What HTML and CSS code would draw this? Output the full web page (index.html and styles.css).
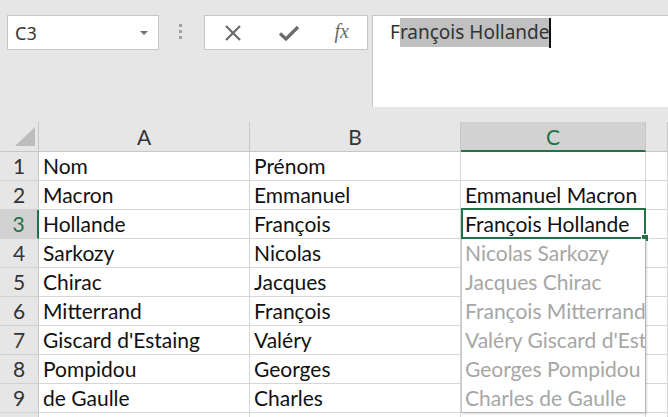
FILE: index.html
```html
<!DOCTYPE html>
<html lang="fr">
<head>
    <meta charset="UTF-8">
    <meta name="viewport" content="width=device-width, initial-scale=1.0">
    <title>Classeur - Présidents</title>
    <link rel="stylesheet" href="styles.css">
</head>
<body>
    <div class="toolbar">
        <div class="namebox">
            <span>C3</span>
            <span class="arrow"></span>
        </div>
        <div class="grip"><i></i><i></i><i></i></div>
        <div class="fxbox">
            <svg class="icon" width="20" height="16" viewBox="0 0 20 16">
                <path d="M3 1 L17 15 M17 1 L3 15" stroke="#6a6a6a" stroke-width="2.2" fill="none"/>
            </svg>
            <svg class="icon" width="22" height="16" viewBox="0 0 22 16">
                <path d="M2 8.5 L8 14 L20 2" stroke="#6a6a6a" stroke-width="3.2" fill="none"/>
            </svg>
            <span class="fx">fx</span>
        </div>
        <div class="formula">
            <span>F</span><span class="selected">rançois Hollande</span><span class="caret"></span>
        </div>
    </div>

    <div class="sheet">
        <!-- en-têtes de colonnes -->
        <div class="corner"><span class="tri"></span></div>
        <div class="colhead">A</div>
        <div class="colhead">B</div>
        <div class="colhead active">C</div>
        <div class="colhead"></div>

        <div class="rowhead">1</div>
        <div class="cell">Nom</div>
        <div class="cell">Prénom</div>
        <div class="cell"></div>
        <div class="cell"></div>

        <div class="rowhead">2</div>
        <div class="cell">Macron</div>
        <div class="cell">Emmanuel</div>
        <div class="cell">Emmanuel Macron</div>
        <div class="cell"></div>

        <div class="rowhead active">3</div>
        <div class="cell">Hollande</div>
        <div class="cell">François</div>
        <div class="cell current">François Hollande</div>
        <div class="cell"></div>

        <!-- colonne C, lignes 4 à 9 : aperçu du remplissage -->
        <div class="preview">
            <div>Nicolas Sarkozy</div>
            <div>Jacques Chirac</div>
            <div>François Mitterrand</div>
            <div>Valéry Giscard d'Estaing</div>
            <div>Georges Pompidou</div>
            <div>Charles de Gaulle</div>
        </div>

        <div class="rowhead">4</div>
        <div class="cell">Sarkozy</div>
        <div class="cell">Nicolas</div>
        <div class="cell"></div>

        <div class="rowhead">5</div>
        <div class="cell">Chirac</div>
        <div class="cell">Jacques</div>
        <div class="cell"></div>

        <div class="rowhead">6</div>
        <div class="cell">Mitterrand</div>
        <div class="cell">François</div>
        <div class="cell"></div>

        <div class="rowhead">7</div>
        <div class="cell">Giscard d'Estaing</div>
        <div class="cell">Valéry</div>
        <div class="cell"></div>

        <div class="rowhead">8</div>
        <div class="cell">Pompidou</div>
        <div class="cell">Georges</div>
        <div class="cell"></div>

        <div class="rowhead">9</div>
        <div class="cell">de Gaulle</div>
        <div class="cell">Charles</div>
        <div class="cell"></div>

        <div class="rowhead"></div>
        <div class="cell"></div>
        <div class="cell"></div>
        <div class="cell"></div>
        <div class="cell"></div>
    </div>
</body>
</html>
```

FILE: styles.css
```css
/* Feuille de calcul */
body {
    margin: 0;
    width: 668px;
    height: 417px;
    overflow: hidden;
    background-color: #fff;
    font-family: Lato, "Noto Sans", sans-serif;
    color: #111;
}

/* Barre de formule */
.toolbar {
    display: flex;
    align-items: flex-start;
    background-color: #e6e6e6;
    padding: 15px 0 15px 7px;
    font-family: "Noto Sans", "Open Sans", sans-serif;
}
.namebox {
    box-sizing: border-box;
    width: 152px;
    height: 35px;
    background-color: #fff;
    border: 1px solid #c6c6c6;
    display: flex;
    align-items: center;
    justify-content: space-between;
    padding: 0 10px 0 7px;
    font-size: 18px;
    color: #333;
}
.arrow {
    width: 0;
    height: 0;
    border-left: 4px solid transparent;
    border-right: 4px solid transparent;
    border-top: 4px solid #707070;
}
.grip {
    display: flex;
    flex-direction: column;
    gap: 3px;
    margin: 9px 0 0 20px;
}
.grip i {
    display: block;
    width: 3px;
    height: 3px;
    background-color: #a0a0a0;
}
.fxbox {
    box-sizing: border-box;
    width: 164px;
    height: 35px;
    margin-left: 22px;
    background-color: #fff;
    border: 1px solid #c6c6c6;
    display: flex;
    align-items: center;
    justify-content: space-between;
    padding: 0 18px 0 18px;
}
.fx {
    font-family: "Liberation Serif", serif;
    font-style: italic;
    font-size: 20px;
    color: #6a6a6a;
    margin-top: -3px;
}
.formula {
    box-sizing: border-box;
    flex: 1;
    height: 92px;
    margin-left: 4px;
    background-color: #fff;
    border-top: 1px solid #c6c6c6;
    border-left: 1px solid #c6c6c6;
    padding: 2px 0 0 17px;
    display: flex;
    align-items: flex-start;
    font-size: 19px;
    line-height: 29px;
    color: #333;
}
.selected {
    background-color: #c0c0c0;
}
.caret {
    width: 2px;
    height: 30px;
    background-color: #111;
}

/* Grille */
.sheet {
    display: grid;
    grid-template-columns: 39px 211px 211px 185px 1fr;
    grid-template-rows: 30px repeat(10, 29px);
    font-size: 21px;
}
.corner, .colhead, .rowhead, .cell {
    box-sizing: border-box;
}
.corner {
    background-color: #e6e6e6;
    border-right: 1px solid #c6c6c6;
    border-bottom: 1px solid #c6c6c6;
    display: flex;
    align-items: flex-end;
    justify-content: flex-end;
    padding: 0 3px 5px 0;
}
.tri {
    width: 0;
    height: 0;
    border-left: 20px solid transparent;
    border-bottom: 19px solid #bcbcbc;
}
.colhead {
    background-color: #e6e6e6;
    border-right: 1px solid #c6c6c6;
    border-bottom: 1px solid #c6c6c6;
    text-align: center;
    line-height: 29px;
    color: #333;
}
.colhead.active {
    background-color: #d2d2d2;
    color: #217346;
    border-bottom: 2px solid #217346;
}
.rowhead {
    background-color: #e6e6e6;
    border-right: 1px solid #c6c6c6;
    border-bottom: 1px solid #d0d0d0;
    text-align: center;
    line-height: 28px;
    color: #333;
}
.rowhead.active {
    background-color: #d2d2d2;
    color: #217346;
    border-right: 2px solid #217346;
}
.cell {
    border-right: 1px solid #d6d6d6;
    border-bottom: 1px solid #d6d6d6;
    padding-left: 4px;
    line-height: 28px;
    white-space: nowrap;
    overflow: hidden;
}
.cell.current {
    position: relative;
    overflow: visible;
}
.cell.current::after {
    content: "";
    position: absolute;
    top: -2px;
    left: 0;
    right: -1px;
    bottom: -1px;
    border: 2px solid #217346;
}
.cell.current::before {
    content: "";
    position: absolute;
    right: -4px;
    bottom: -4px;
    width: 6px;
    height: 6px;
    background-color: #217346;
    border: 1px solid #fff;
    z-index: 1;
}

/* Aperçu du remplissage instantané */
.preview {
    grid-column: 4;
    grid-row: 5 / 11;
    box-sizing: border-box;
    border-left: 1px solid #c8c8c8;
    border-right: 1px solid #b4b4b4;
    border-bottom: 1px solid #b4b4b4;
    box-shadow: 1px 1px 2px rgba(0, 0, 0, 0.15);
    background-color: #fff;
    color: #a6a6a6;
    overflow: hidden;
    z-index: 1;
}
.preview div {
    height: 29px;
    line-height: 28px;
    padding-left: 3px;
    white-space: nowrap;
}
```
